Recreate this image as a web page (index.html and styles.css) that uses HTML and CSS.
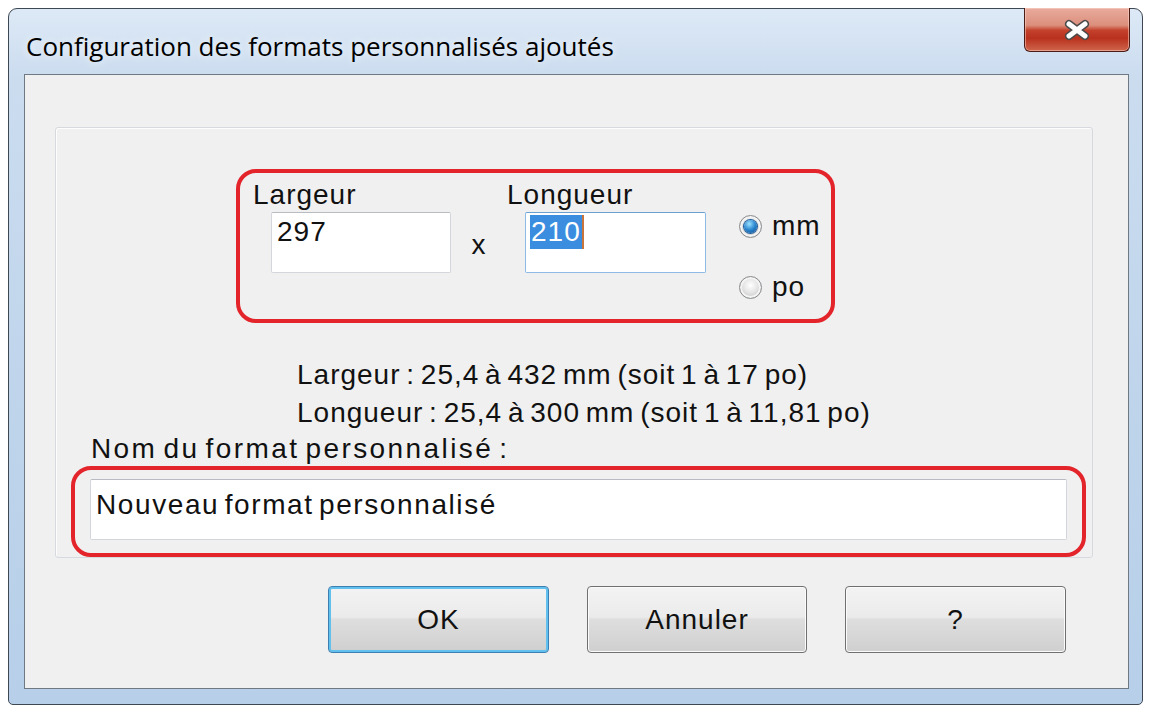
FILE: index.html
```html
<!DOCTYPE html>
<html lang="fr">
<head>
    <meta charset="UTF-8">
    <title>Configuration des formats personnalisés ajoutés</title>
    <link rel="stylesheet" href="styles.css">
</head>
<body>
    <div id="window">
        <div id="titlebar">
            <span class="title">Configuration des formats personnalisés ajoutés</span>
            <div id="closeBtn">
                <svg width="28" height="22" viewBox="0 0 28 22">
                    <path d="M6 5 L22 17 M22 5 L6 17" stroke="#4a4a4a" stroke-width="8" stroke-linecap="round"/>
                    <path d="M6 5 L22 17 M22 5 L6 17" stroke="#ffffff" stroke-width="5" stroke-linecap="round"/>
                </svg>
            </div>
        </div>
        <div id="client">
            <div id="group">
                <div class="mark size-mark">
                    <div class="field">
                        <div class="label">Largeur</div>
                        <div class="edit small">297</div>
                    </div>
                    <div class="times">x</div>
                    <div class="field">
                        <div class="label">Longueur</div>
                        <div class="edit small focused"><span class="sel">210</span><span class="caret"></span></div>
                    </div>
                    <div class="units">
                        <div class="radio-row"><span class="radio checked"></span>mm</div>
                        <div class="radio-row"><span class="radio"></span>po</div>
                    </div>
                </div>
                <div class="limits">
                    <div>Largeur : 25,4 à 432 mm (soit 1 à 17 po)</div>
                    <div>Longueur : 25,4 à 300 mm (soit 1 à 11,81 po)</div>
                </div>
                <div class="name-label">Nom du format personnalisé :</div>
                <div class="mark name-mark">
                    <div class="edit wide">Nouveau format personnalisé</div>
                </div>
            </div>
            <div id="buttons">
                <button class="btn default">OK</button>
                <button class="btn">Annuler</button>
                <button class="btn">?</button>
            </div>
        </div>
    </div>
</body>
</html>
```

FILE: styles.css
```css
body { margin: 0; background: #fff; font-family: "Liberation Sans", Arial, sans-serif; color: #111; }

#window {
    margin: 8px;
    width: 1135px;
    height: 697px;
    box-sizing: border-box;
    border: 1px solid #3e4853;
    border-radius: 9px 9px 5px 5px;
    background: linear-gradient(#dde9f6, #cbdcef 10%, #bed4eb 60%, #b7cfe9);
    padding: 0 13px 15px 15px;
    position: relative;
}

#titlebar {
    height: 65px;
    box-sizing: border-box;
    padding: 8px 0 0 2px;
    display: flex;
    align-items: center;
}
#titlebar .title {
    font-family: "Open Sans", "Noto Sans", sans-serif;
    font-size: 26px;
    color: #000;
    text-shadow: 0 0 8px rgba(255, 255, 255, 0.9);
}

#closeBtn {
    position: absolute;
    top: -1px;
    right: 12px;
    width: 106px;
    height: 44px;
    box-sizing: border-box;
    border: 1px solid #4b1c16;
    border-top: none;
    border-radius: 0 0 6px 6px;
    background: linear-gradient(#e9ab9d 0%, #dc8f7d 40%, #c4412c 52%, #b8311e 70%, #d0654c 100%);
    box-shadow: inset 0 0 0 1px rgba(255, 220, 210, 0.5);
    display: flex;
    align-items: center;
    justify-content: center;
}

#client {
    height: 615px;
    box-sizing: border-box;
    border: 1px solid #6f7984;
    background: #f0f0f0;
    padding: 52px 35px 0 30px;
}

#group {
    border: 1px solid #d6dadf;
    border-radius: 3px;
    box-shadow: inset 1px 1px 0 #fdfdfd;
}

.mark {
    border: 4px solid #e3242b;
    border-radius: 20px;
    box-sizing: border-box;
}

.size-mark {
    display: flex;
    width: 599px;
    height: 154px;
    margin: 41px 0 0 180px;
    padding: 6px 0 0 13px;
    font-size: 28px;
    letter-spacing: 1px;
}

.label { height: 33px; line-height: 32px; }

.edit {
    box-sizing: border-box;
    background: #fff;
    border: 1px solid #d3d7dc;
    border-top-color: #b8bcc2;
    border-radius: 2px;
    font-size: 28px;
    letter-spacing: 1px;
    line-height: 34px;
    padding: 2px 0 0 5px;
    white-space: nowrap;
}
.edit.small { margin-left: 18px; width: 180px; height: 61px; }
.field:nth-child(3) .edit.small { width: 181px; }
.edit.focused { border-color: #8dbbe6; border-top-color: #6a9fd2; padding-left: 4px; }
.sel {
    display: inline-block;
    background: #3b8de0;
    color: #fff;
    padding: 0 1px;
    line-height: 34px;
}
.caret {
    display: inline-block;
    width: 2px;
    height: 34px;
    vertical-align: top;
    background: #c8743a;
}

.times {
    width: 56px;
    text-align: center;
    margin-top: 50px;
    line-height: 32px;
}

.units { margin-left: 33px; padding-top: 31px; }
.radio-row {
    display: flex;
    align-items: center;
    gap: 10px;
    height: 32px;
    margin-bottom: 29px;
}
.radio {
    width: 23px;
    height: 23px;
    box-sizing: border-box;
    border-radius: 50%;
    border: 1px solid #8a8c8e;
    background: radial-gradient(circle at 50% 40%, #ffffff 0%, #e4e4e4 45%, #c9c9c9 75%, #b5b5b5 100%);
    box-shadow: inset 0 0 0 2px #f4f4f4;
    display: flex;
    align-items: center;
    justify-content: center;
}
.radio.checked::after {
    content: "";
    width: 13px;
    height: 13px;
    border-radius: 50%;
    background: radial-gradient(circle at 40% 30%, #9be2ff, #2a86cf 50%, #0d4a8c);
    box-shadow: 0 0 0 1px #1f5f9e;
}

.limits {
    margin: 33px 0 0 241px;
    font-size: 28px;
    letter-spacing: 1px;
    word-spacing: -3px;
    line-height: 38px;
}

.name-label {
    margin-left: 35px;
    font-size: 28px;
    letter-spacing: 2.4px;
    word-spacing: -4px;
    line-height: 34px;
}

.name-mark {
    width: 1015px;
    margin-left: 15px;
    padding: 9px 15px 13px 15px;
}
.edit.wide { height: 61px; padding-top: 8px; letter-spacing: 1.6px; word-spacing: -4px; }

#buttons {
    display: flex;
    justify-content: flex-end;
    gap: 38px;
    margin: 28px 27px 0 0;
}
.btn {
    width: 221px;
    height: 67px;
    border: 1px solid #707070;
    border-radius: 4px;
    background: linear-gradient(#f3f3f3 0%, #ebebeb 46%, #dedede 50%, #cfcfcf 100%);
    box-shadow: inset 0 0 0 1px #fbfbfb;
    font-family: "Liberation Sans", Arial, sans-serif;
    font-size: 28px;
    letter-spacing: 1px;
    color: #111;
    padding: 0;
}
.btn:nth-child(2) { width: 220px; }
.btn.default {
    border-color: #3c7fb1;
    box-shadow: inset 0 0 0 2px #62c0ef;
}
```
